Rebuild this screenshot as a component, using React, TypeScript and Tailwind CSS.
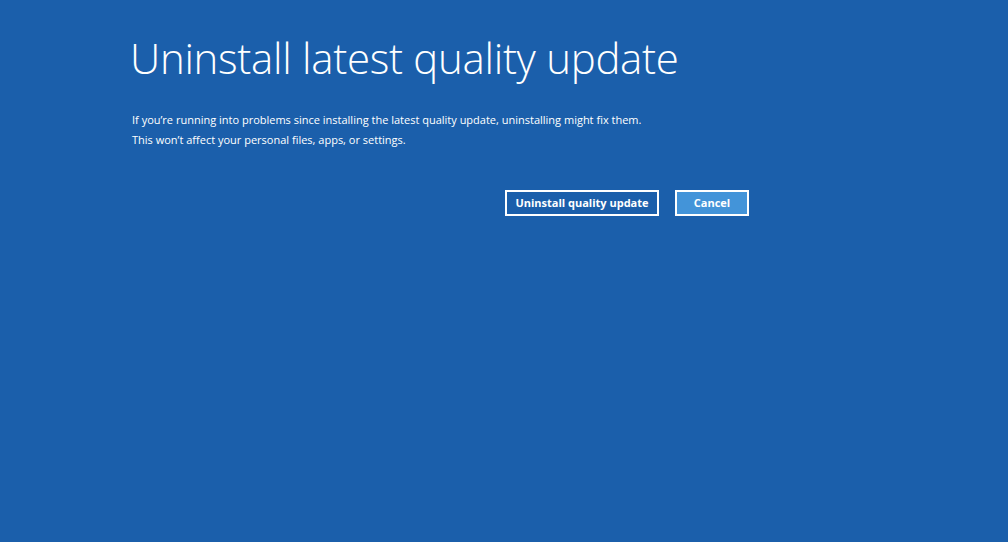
export default function App() {
  return (
    <div className="h-[542px] w-[1008px] overflow-hidden bg-[#1b5fab] text-white" style={{ fontFamily: '"Open Sans", "Noto Sans", sans-serif' }}>
      <div className="flex flex-col pl-[130px] pt-[31px]">
        <h1 className="text-[42px] font-light leading-[54px] tracking-[-0.3px]">Uninstall latest quality update</h1>
        <div className="mt-[25px] pl-[2px] text-[11px] leading-[20px]">
          <p>If you’re running into problems since installing the latest quality update, uninstalling might fix them.</p>
          <p>This won’t affect your personal files, apps, or settings.</p>
        </div>
        <div className="mt-[40px] flex w-[619px] justify-end gap-4">
          <button className="h-[26px] w-[154px] border-2 border-white bg-transparent text-[11px] font-bold">Uninstall quality update</button>
          <button className="h-[26px] w-[74px] border-2 border-white bg-[#4394d9] text-[11px] font-bold">Cancel</button>
        </div>
      </div>
    </div>
  );
}
